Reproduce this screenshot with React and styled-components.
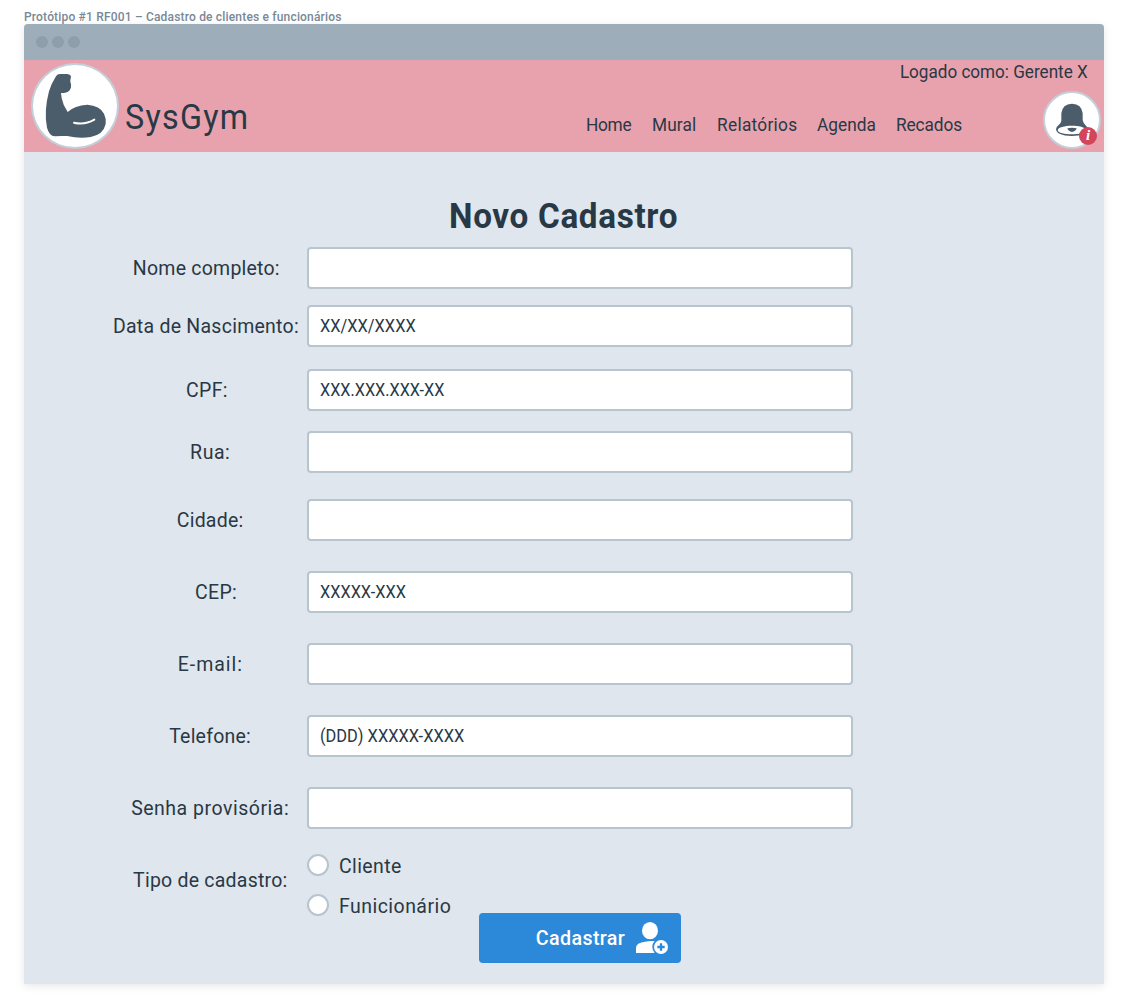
import React from "react";
import styled, { createGlobalStyle } from "styled-components";

const Global = createGlobalStyle`
  * { box-sizing: border-box; }
  body { margin: 0; background: #fff; }
`;

const Page = styled.main`
  width: 1128px;
  height: 1008px;
  padding: 9px 24px 24px;
  overflow: hidden;
  font-family: Roboto, "Liberation Sans", sans-serif;
  color: #293845;
  white-space: nowrap;
`;

const Text = styled.span`
  display: inline-block;
  letter-spacing: ${(p) => p.$track || 0}px;
  transform: ${(p) => (p.$squeeze ? `scaleX(${p.$squeeze})` : "none")};
  transform-origin: ${(p) => p.$origin || "left"} center;
`;

const Caption = styled.div`
  height: 15px;
  padding-top: 1px;
  font-size: 12px;
  line-height: 15px;
  font-weight: 500;
  color: #788896;
`;

const Frame = styled.section`
  height: 960px;
  border-radius: 4px 4px 0 0;
  background: #dfe6ed;
  box-shadow: 0 2px 8px rgba(0, 0, 0, 0.1);
`;

const Chrome = styled.div`
  display: flex;
  align-items: center;
  gap: 4px;
  height: 36px;
  padding-left: 12px;
  border-radius: 4px 4px 0 0;
  background: #9eadba;
`;

const Dot = styled.i`
  width: 12px;
  height: 12px;
  border-radius: 50%;
  background: #8e9eac;
`;

const Header = styled.header`
  display: flex;
  justify-content: space-between;
  height: 92px;
  padding: 3px 3px 3px 7px;
  background: #e8a2ad;
`;

const Brand = styled.div`
  display: flex;
  gap: 6px;
`;

const Round = styled.div`
  position: relative;
  flex: none;
  width: ${(p) => p.$w}px;
  height: ${(p) => p.$h}px;
  border: 2px solid #c3cfd9;
  border-radius: 50%;
  background: #fff;
  svg { display: block; }
`;

const BrandName = styled.div`
  padding-top: 33px;
  font-size: 35.5px;
  line-height: 42px;
`;

const HeaderRight = styled.div`
  display: flex;
  flex-direction: column;
  align-items: flex-end;
`;

const Session = styled.div`
  height: 28px;
  padding-right: 13px;
  font-size: 18px;
  line-height: 18px;
`;

const Tools = styled.div`
  display: flex;
  align-items: center;
`;

const Nav = styled.nav`
  display: flex;
  padding: 10px 81px 0 0;
  font-size: 18px;
  line-height: 22px;
`;

const NavItem = styled.a`
  width: ${(p) => p.$w}px;
`;

const Badge = styled.b`
  position: absolute;
  left: 34px;
  top: 34px;
  width: 18px;
  height: 18px;
  border-radius: 50%;
  background: #d3455b;
  color: #fff;
  font: italic bold 15px/17px "Liberation Serif", serif;
  text-align: center;
`;

const Title = styled.h1`
  margin: 0;
  padding-top: 44px;
  height: 95px;
  font-size: 35px;
  line-height: 42px;
  font-weight: 700;
  text-align: center;
`;

const Row = styled.div`
  display: flex;
  height: ${(p) => p.$h || 42}px;
  margin-top: ${(p) => p.$gap}px;
`;

const Label = styled.label`
  flex: 0 0 283px;
  padding-left: ${(p) => p.$indent}px;
  font-size: 20.5px;
  line-height: ${(p) => p.$h || 42}px;
  text-align: center;
`;

const Field = styled.div`
  width: 546px;
  height: 42px;
  padding-left: 11px;
  border: 2px solid #b8c4ce;
  border-radius: 4px;
  background: #fff;
  font-size: 18px;
  line-height: 38px;
`;

const Options = styled.div`
  display: flex;
  flex-direction: column;
  gap: 18px;
`;

const Option = styled.div`
  display: flex;
  align-items: center;
  flex: none;
  gap: 10px;
  height: 22px;
  font-size: 20.5px;
  line-height: 24px;
  span { padding-top: 2px; }
`;

const Radio = styled.i`
  width: 22px;
  height: 22px;
  border: 2px solid #b8c4ce;
  border-radius: 50%;
  background: #fff;
`;

const Submit = styled.button`
  display: flex;
  align-items: center;
  justify-content: flex-end;
  gap: 10px;
  width: 202px;
  height: 50px;
  margin: 7px 0 0 455px;
  padding: 0 12px 0 0;
  border: 0;
  border-radius: 4px;
  background: #2c88d9;
  color: #fff;
  font: 500 20.5px/24px Roboto, "Liberation Sans", sans-serif;
  svg { margin-bottom: 2px; }
`;

const Arm = () => (
  <svg width="84" height="82" viewBox="27 27 252 246">
    <path
      fill="#4b5c6b"
      d="M96 61Q100 54 108 54L128 54Q139 54 141 62L139 73Q138 80 141 83L141 94Q138 108 124 110Q116 112 111 111L113 127Q117 148 131 168Q152 148 190 146Q228 149 240 173Q247 187 245 204Q238 236 200 243Q165 248 130 240Q105 239 92 241Q76 240 69 215Q59 167 75 106Q82 83 96 61Z"
    />
    <path d="M150 200Q181 208 211 191" fill="none" stroke="#fff" strokeWidth="6" strokeLinecap="round" />
  </svg>
);

const Bell = () => (
  <svg width="54" height="54" viewBox="45 111 162 162">
    <path
      fill="#4b5c6b"
      d="M94 194V172Q97 144 126 143Q155 144 158 172V192Q160 204 168 209Q173 213 173 220Q170 240 125 240Q80 239 78 220Q78 213 86 207Q93 202 94 194Z"
    />
    <path fill="#fff" d="M83 223C84 205 164 205 168 222C166 239 85 239 83 223Z" />
    <path fill="#4b5c6b" d="M112 217Q126 214 140 217Q137 227 126 228Q115 227 112 217Z" />
  </svg>
);

const UserPlus = () => (
  <svg width="34" height="33" viewBox="495 63 102 99">
    <ellipse cx="540" cy="92" rx="24" ry="26" fill="#fff" />
    <path d="M498 159V144C498 129 518 123 554 123V159Z" fill="#fff" />
    <circle cx="573" cy="141" r="26" fill="#2c88d9" />
    <circle cx="573" cy="141" r="21" fill="#fff" />
    <path d="M573 130V152M562 141H584" stroke="#2c88d9" strokeWidth="7" />
  </svg>
);

const nav = [
  ["Home", 66, -0.3],
  ["Mural", 65, 0.1],
  ["Relatórios", 100, 0.3],
  ["Agenda", 79, 0],
  ["Recados", 66.5, -0.1],
];

const fields = [
  { label: "Nome completo:", track: 0.25, indent: 81, gap: 0 },
  { label: "Data de Nascimento:", track: 0.28, indent: 81, gap: 16, value: "XX/XX/XXXX", squeeze: 0.91 },
  { label: "CPF:", track: 0.3, indent: 82, gap: 22, value: "XXX.XXX.XXX-XX", squeeze: 0.9 },
  { label: "Rua:", track: 0.6, indent: 89, gap: 20 },
  { label: "Cidade:", track: 0.25, indent: 89, gap: 26 },
  { label: "CEP:", track: 0.3, indent: 102, gap: 30, value: "XXXXX-XXX", squeeze: 0.905 },
  { label: "E-mail:", track: 1.05, indent: 89, gap: 30 },
  { label: "Telefone:", track: 0.25, indent: 89, gap: 30, value: "(DDD) XXXXX-XXXX", squeeze: 0.91 },
  { label: "Senha provisória:", track: 0.55, indent: 89, gap: 30 },
];

export default function App() {
  return (
    <Page>
      <Global />
      <Caption>
        <Text $track={0.18}>Protótipo #1 RF001 – Cadastro de clientes e funcionários</Text>
      </Caption>
      <Frame>
        <Chrome>
          <Dot />
          <Dot />
          <Dot />
        </Chrome>
        <Header>
          <Brand>
            <Round $w={88} $h={86}>
              <Arm />
            </Round>
            <BrandName>
              <Text $squeeze={0.91} $track={1.4}>SysGym</Text>
            </BrandName>
          </Brand>
          <HeaderRight>
            <Session>
              <Text $squeeze={0.95} $track={0} $origin="right">Logado como: Gerente X</Text>
            </Session>
            <Tools>
              <Nav>
                {nav.map(([name, w, track]) => (
                  <NavItem key={name} $w={w}>
                    <Text $squeeze={0.96} $track={track}>{name}</Text>
                  </NavItem>
                ))}
              </Nav>
              <Round $w={58} $h={58}>
                <Bell />
                <Badge>i</Badge>
              </Round>
            </Tools>
          </HeaderRight>
        </Header>
        <Title>
          <Text $squeeze={0.95} $track={0.7} $origin="center">Novo Cadastro</Text>
        </Title>
        {fields.map((f) => (
          <Row key={f.label} $gap={f.gap}>
            <Label $indent={f.indent}>
              <Text $squeeze={0.95} $track={f.track} $origin="center">{f.label}</Text>
            </Label>
            <Field>{f.value && <Text $squeeze={f.squeeze}>{f.value}</Text>}</Field>
          </Row>
        ))}
        <Row $gap={25} $h={52}>
          <Label $indent={90} $h={52}>
            <Text $squeeze={0.95} $track={0.25} $origin="center">Tipo de cadastro:</Text>
          </Label>
          <Options>
            <Option>
              <Radio />
              <Text $squeeze={0.95} $track={0.4}>Cliente</Text>
            </Option>
            <Option>
              <Radio />
              <Text $squeeze={0.95} $track={0.5}>Funicionário</Text>
            </Option>
          </Options>
        </Row>
        <Submit>
          <Text $squeeze={0.96} $track={0.4} $origin="right">Cadastrar</Text>
          <UserPlus />
        </Submit>
      </Frame>
    </Page>
  );
}
